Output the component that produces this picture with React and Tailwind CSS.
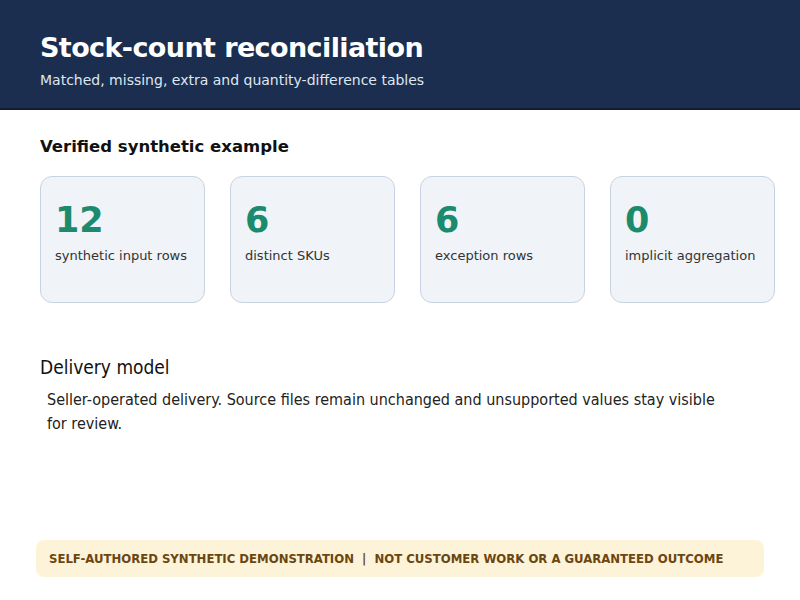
export default function App() {
  const cards = [
    ["12", "synthetic input rows"],
    ["6", "distinct SKUs"],
    ["6", "exception rows"],
    ["0", "implicit aggregation"],
  ];
  const cond = { fontFamily: '"DejaVu Sans Condensed", "Liberation Sans Narrow", sans-serif' };
  return (
    <div className="w-[800px] h-[600px] bg-white flex flex-col" style={{ fontFamily: '"DejaVu Sans", Verdana, sans-serif' }}>
      <div className="h-[110px] bg-[#1b2e4f] border-b-2 border-[#0f1c33] px-10 pt-[31px]">
        <h1 className="text-[27px] leading-[34px] font-bold text-white tracking-[-0.6px]">Stock-count reconciliation</h1>
        <p className="mt-[5px] text-[14px] text-[#dfe6f0]">Matched, missing, extra and quantity-difference tables</p>
      </div>
      <div className="px-10">
        <h2 className="mt-[25px] text-[16.5px] font-semibold text-[#111]">Verified synthetic example</h2>
        <div className="mt-[16px] grid grid-cols-4 gap-[25px] w-[735px]">
          {cards.map(([n, l]) => (
            <div key={l} className="h-[127px] rounded-xl border border-[#c8d3e2] bg-[#f0f3f8] px-[14px] pt-[23px]">
              <div className="text-[35px] leading-[40px] font-bold text-[#1c8a6c]">{n}</div>
              <div className="mt-[6px] text-[13px] text-[#333]">{l}</div>
            </div>
          ))}
        </div>
        <h2 className="mt-[50px] text-[19px] font-medium text-[#111]" style={cond}>Delivery model</h2>
        <p className="mt-[7px] ml-[7px] w-[690px] text-[16px] leading-[24px] text-[#222]" style={cond}>
          Seller-operated delivery. Source files remain unchanged and unsupported values stay visible for review.
        </p>
      </div>
      <div className="mt-auto mb-[23px] mx-[36px] h-[37px] rounded-lg bg-[#fdf3d9] flex items-center px-[13px] text-[13px] font-semibold text-[#6b4611]" style={cond}>
        SELF-AUTHORED SYNTHETIC DEMONSTRATION&nbsp;&nbsp;|&nbsp;&nbsp;NOT CUSTOMER WORK OR A GUARANTEED OUTCOME
      </div>
    </div>
  );
}
